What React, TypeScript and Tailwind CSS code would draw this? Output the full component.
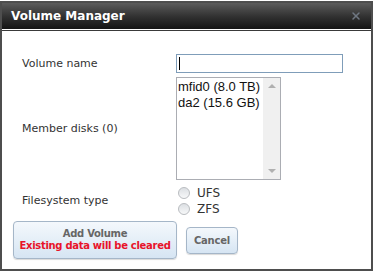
import { X } from "lucide-react"

const disks = ["mfid0 (8.0 TB)", "da2 (15.6 GB)"]

function Radio({ label }: { label: string }) {
  return (
    <label className="flex h-4 items-center gap-[7px]">
      <span className="h-[12px] w-[12px] rounded-full border border-[#b9bcc0] bg-gradient-to-b from-[#dcdfe3] to-[#f7f8f9]" />
      <span className="text-[12px] text-[#333]">{label}</span>
    </label>
  )
}

export default function App() {
  return (
    <div
      className="h-[272px] w-[375px] overflow-hidden bg-white pt-[1px]"
      style={{ fontFamily: '"DejaVu Sans", Verdana, sans-serif' }}
    >
      <div className="flex h-[270px] w-[373px] flex-col border-2 border-[#4e4e4e] bg-white">
        <div className="flex h-[26px] items-center justify-between bg-gradient-to-b from-[#5c5c5c] via-[#333] to-[#141414] pl-[9px] pr-[9px]">
          <span className="text-[12px] font-bold text-white">Volume Manager</span>
          <X className="h-[12px] w-[12px] text-[#6f7782]" strokeWidth={3} />
        </div>
        <div className="h-[1px] bg-white" />
        <div className="h-[1px] bg-[#3a3a3a]" />

        <div className="flex flex-1 flex-col pl-[20px] pt-[23px]">
          <div className="flex items-center">
            <span className="w-[154px] pt-[2px] text-[11px] text-[#333]">Volume name</span>
            <div className="flex h-[19px] w-[167px] items-center border border-[#7f9db9] bg-white pl-[2px]">
              <span className="h-[13px] w-px bg-black" />
            </div>
          </div>

          <div className="mt-[4px] flex items-center">
            <span className="w-[154px] pt-[2px] text-[11px] text-[#333]">Member disks (0)</span>
            <div className="flex h-[103px] w-[105px] border border-[#abadb3] bg-white">
              <div
                className="flex-1 pl-[1px] pt-[1px] text-[13px] leading-[16px] text-[#111]"
                style={{ fontFamily: '"Liberation Sans", Arial, sans-serif' }}
              >
                {disks.map((d) => (
                  <div key={d}>{d}</div>
                ))}
              </div>
              <div className="flex w-[17px] flex-col items-center justify-between bg-[#f0f0f0] py-[6px]">
                <span className="h-0 w-0 border-x-[4px] border-b-[4px] border-x-transparent border-b-[#b0b0b0]" />
                <span className="h-0 w-0 border-x-[4px] border-t-[4px] border-x-transparent border-t-[#b0b0b0]" />
              </div>
            </div>
          </div>

          <div className="mt-[5px] flex items-center">
            <span className="w-[156px] pt-[1px] text-[11px] text-[#333]">Filesystem type</span>
            <div className="flex flex-col">
              <Radio label="UFS" />
              <Radio label="ZFS" />
            </div>
          </div>

          <div className="ml-[-9px] mt-[4px] flex items-center gap-[9px]">
            <button className="flex h-[38px] w-[164px] flex-col items-center justify-center whitespace-nowrap rounded-[4px] border border-[#a5b6c8] bg-gradient-to-b from-[#f4f8fc] to-[#d6e5f3] text-[10px] font-bold leading-[12px] tracking-[-0.3px] shadow-[0_1px_1px_rgba(0,0,0,0.15)]">
              <span className="text-[#666]">Add Volume</span>
              <span className="text-[#e8132a]">Existing data will be cleared</span>
            </button>
            <button className="h-[27px] w-[52px] rounded-[4px] border border-[#a5b6c8] bg-gradient-to-b from-[#f4f8fc] to-[#d6e5f3] text-[10px] font-bold tracking-[-0.2px] text-[#666] shadow-[0_1px_1px_rgba(0,0,0,0.15)]">
              Cancel
            </button>
          </div>
        </div>
      </div>
    </div>
  )
}
